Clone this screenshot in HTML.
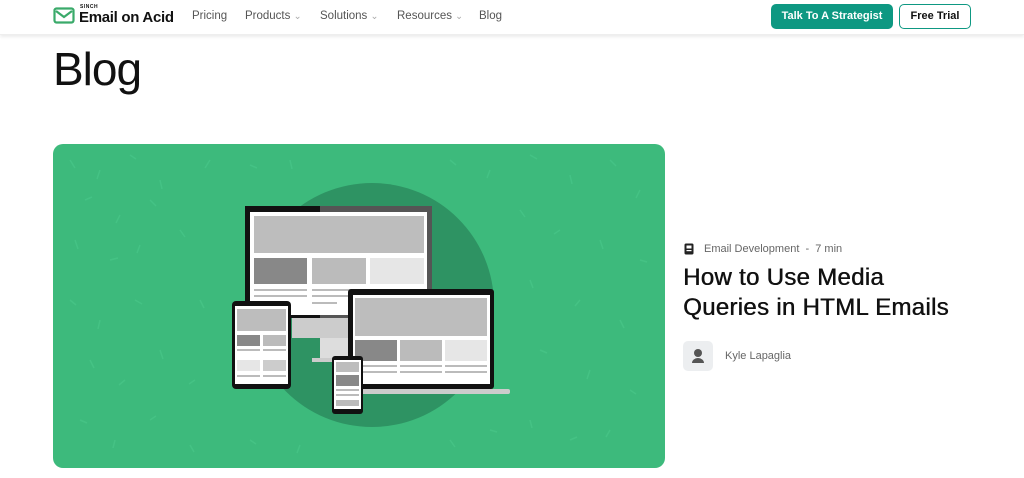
<!DOCTYPE html>
<html><head><meta charset="utf-8"><style>
*{margin:0;padding:0;box-sizing:border-box}
body{width:1024px;height:478px;overflow:hidden;background:#fff;font-family:"Liberation Sans",sans-serif;color:#111;position:relative}
.hdr{position:absolute;left:0;top:0;width:1024px;height:35px;background:#fff;box-shadow:0 2px 3px rgba(0,0,0,.08);border-bottom:1px solid #eee}
.nav{position:absolute;top:10px;font-size:11.5px;color:#555}
.nav span{position:absolute;white-space:nowrap}
.btn1{position:absolute;left:771px;top:4px;width:122px;height:25px;background:#0e9882;color:#fff;border-radius:5px;font-size:11px;font-weight:bold;text-align:center;line-height:25px}
.btn2{position:absolute;left:899px;top:4px;width:72px;height:25px;border:1.5px solid #0e9882;color:#111;border-radius:5px;font-size:11px;font-weight:bold;text-align:center;line-height:22px}
h1{position:absolute;left:53px;top:42px;font-size:46px;font-weight:normal;letter-spacing:-1px}
.card{position:absolute;left:53px;top:144px;width:612px;height:324px;background:#3dba7c;border-radius:10px;overflow:hidden}
.meta{position:absolute;left:704px;top:243px;font-size:11px;color:#666}
.title{position:absolute;left:683px;top:263px;font-size:24px;line-height:30px;color:#111;letter-spacing:.3px;text-shadow:0.5px 0 0 #111}
.av{position:absolute;left:683px;top:341px;width:30px;height:30px;background:#eceef0;border-radius:5px}
.name{position:absolute;left:725px;top:350px;font-size:11px;color:#666}
</style></head><body>
<div class="hdr">
<svg style="position:absolute;left:53px;top:7px" width="22" height="17" viewBox="0 0 22 17"><rect x="1.5" y="1.5" width="19" height="14" rx="2" fill="none" stroke="#3aaa6a" stroke-width="2.2"/><path d="M3 4 L11 10 L19 4" fill="none" stroke="#3aaa6a" stroke-width="2.2"/></svg>
<div style="position:absolute;left:80px;top:4px;font-size:5px;font-weight:bold;letter-spacing:.5px">SINCH</div>
<div style="position:absolute;left:79px;top:9px;font-size:15px;font-weight:bold;letter-spacing:-.3px">Email on Acid</div>
<div class="nav"><span style="left:192px">Pricing</span><span style="left:245px">Products <small style="color:#aaa">⌄</small></span><span style="left:320px">Solutions <small style="color:#aaa">⌄</small></span><span style="left:397px">Resources <small style="color:#aaa">⌄</small></span><span style="left:479px">Blog</span></div>
<div class="btn1">Talk To A Strategist</div><div class="btn2">Free Trial</div>
</div>
<h1>Blog</h1>
<div class="card">
<svg width="612" height="324" viewBox="53 144 612 324">
<g stroke="#47c587" stroke-width="1.5" opacity=".8">
<path d="M70 160l5 8M100 170l-3 9M130 155l6 4M160 180l2 9M85 200l7-3M120 215l-4 8M150 200l6 6M75 240l3 9M110 260l8-2M140 245l-3 8M180 230l5 7M70 300l6 5M100 320l-2 9M135 300l7 4M90 360l4 8M125 380l-6 5M160 350l3 9M80 420l7 3M115 440l-2 8M150 420l6-4M190 445l4 7M210 160l-5 8M250 165l7 3M290 160l2 9M450 160l6 5M490 170l-3 8M530 155l7 4M570 175l2 9M610 160l6 6M640 190l-4 8M520 210l5 7M560 230l-6 4M600 240l3 9M640 260l7 2M530 280l3 8M580 300l-5 6M620 320l4 8M540 350l7 3M590 370l-3 9M630 390l6 4M530 420l2 8M570 440l7-3M610 430l-4 7M250 440l6 4M300 445l-3 8M450 440l5 7M490 430l7 2M200 300l4 8M195 380l-6 4"/>
</g>
<circle cx="372" cy="305" r="122" fill="#2e9363"/>
<rect x="245" y="206" width="187" height="112" fill="#111"/>
<rect x="320" y="206" width="112" height="112" fill="#555"/>
<rect x="250" y="212" width="177" height="103" fill="#fff"/>
<rect x="254" y="216" width="170" height="37" fill="#bdbdbd"/>
<rect x="254" y="258" width="53" height="26" fill="#888"/>
<rect x="312" y="258" width="54" height="26" fill="#bbb"/>
<rect x="370" y="258" width="54" height="26" fill="#e6e6e6"/>
<g fill="#bbb"><rect x="254" y="289" width="53" height="2"/><rect x="254" y="295" width="53" height="2"/><rect x="312" y="289" width="54" height="2"/><rect x="312" y="295" width="54" height="2"/><rect x="312" y="302" width="25" height="2"/></g>
<rect x="292" y="318" width="56" height="20" fill="#ccc"/>
<rect x="320" y="338" width="28" height="20" fill="#ddd"/>
<rect x="312" y="358" width="40" height="4" fill="#ccc"/>
<rect x="348" y="289" width="146" height="100" rx="3" fill="#111"/>
<rect x="353" y="295" width="137" height="89" fill="#fff"/>
<rect x="355" y="298" width="132" height="38" fill="#bdbdbd"/>
<rect x="355" y="340" width="42" height="21" fill="#888"/>
<rect x="400" y="340" width="42" height="21" fill="#bbb"/>
<rect x="445" y="340" width="42" height="21" fill="#e6e6e6"/>
<g fill="#bbb"><rect x="355" y="365" width="42" height="2"/><rect x="355" y="371" width="42" height="2"/><rect x="400" y="365" width="42" height="2"/><rect x="400" y="371" width="42" height="2"/><rect x="445" y="365" width="42" height="2"/><rect x="445" y="371" width="42" height="2"/></g>
<rect x="340" y="389" width="170" height="5" rx="2" fill="#ccc"/>
<rect x="232" y="301" width="59" height="88" rx="4" fill="#111"/>
<rect x="235" y="306" width="53" height="78" fill="#fff"/>
<rect x="237" y="309" width="49" height="22" fill="#bdbdbd"/>
<rect x="237" y="335" width="23" height="11" fill="#888"/><rect x="263" y="335" width="23" height="11" fill="#bbb"/>
<rect x="237" y="360" width="23" height="11" fill="#e6e6e6"/><rect x="263" y="360" width="23" height="11" fill="#ccc"/>
<g fill="#bbb"><rect x="237" y="349" width="23" height="2"/><rect x="263" y="349" width="23" height="2"/><rect x="237" y="375" width="23" height="2"/><rect x="263" y="375" width="23" height="2"/></g>
<rect x="332" y="356" width="31" height="58" rx="3" fill="#111"/>
<rect x="334" y="360" width="27" height="49" fill="#fff"/>
<rect x="336" y="362" width="23" height="10" fill="#bdbdbd"/>
<rect x="336" y="375" width="23" height="11" fill="#888"/>
<g fill="#bbb"><rect x="336" y="389" width="23" height="2"/><rect x="336" y="394" width="23" height="2"/><rect x="336" y="400" width="23" height="6"/></g>
</svg>
</div>
<svg style="position:absolute;left:684px;top:243px" width="11" height="12" viewBox="0 0 11 12"><rect x="0.5" y="0.5" width="9" height="11" rx="1.5" fill="#222"/><rect x="2.5" y="2.5" width="5" height="3" fill="#fff"/><rect x="2.5" y="7" width="5" height="1.2" fill="#fff"/></svg>
<div class="meta">Email Development &nbsp;-&nbsp; 7 min</div>
<div class="title">How to Use Media<br>Queries in HTML Emails</div>
<div class="av"><svg width="30" height="30" viewBox="0 0 30 30"><circle cx="15" cy="12" r="4" fill="#555"/><path d="M9 22a6 5 0 0 1 12 0z" fill="#555"/></svg></div>
<div class="name">Kyle Lapaglia</div>
</body></html>
